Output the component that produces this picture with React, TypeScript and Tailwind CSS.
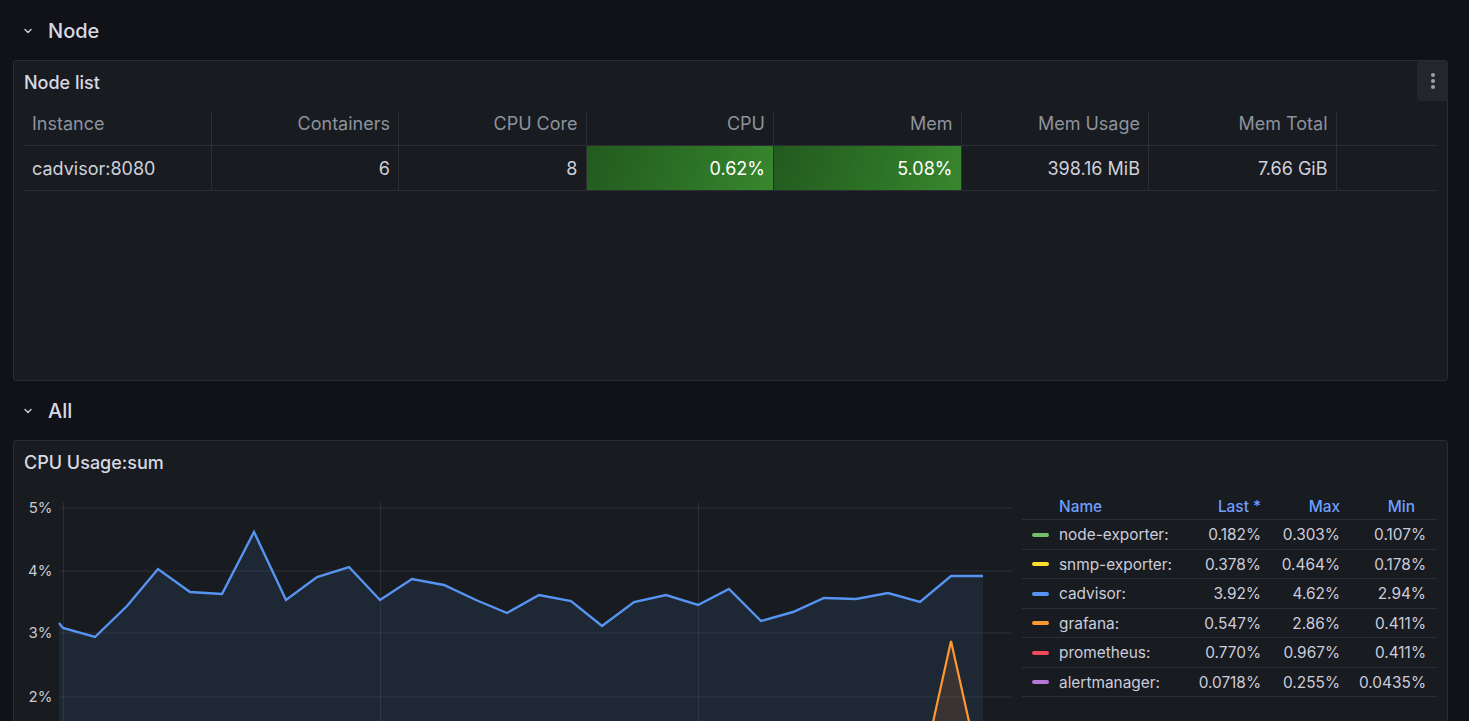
import { ReactNode } from "react";

type Pt = [number, number];

// chart points, in page pixels (svg viewBox matches page coords)
const cadvisorLine: Pt[] = [
  [59, 623], [63, 628], [95, 637], [127, 606], [158, 569], [190, 592], [222, 594], [254, 532],
  [286, 600], [317, 577], [349, 567], [380, 600], [412, 579], [444, 585], [476, 600], [507, 613],
  [539, 595], [571, 601], [602, 626], [634, 602], [666, 595], [698, 605], [729, 589], [761, 621],
  [793, 612], [824, 598], [856, 599], [888, 593], [920, 602], [951, 576], [983, 576],
];
const grafanaLine: Pt[] = [[888, 790], [920, 781], [951, 641], [983, 784]];

const toPath = (pts: Pt[]) => pts.map(([x, y], i) => `${i === 0 ? "M" : "L"}${x} ${y}`).join(" ");
const toArea = (pts: Pt[], base: number) =>
  `${toPath(pts)} L${pts[pts.length - 1][0]} ${base} L${pts[0][0]} ${base} Z`;

const yTicks = [
  { label: "5%", y: 508 },
  { label: "4%", y: 571 },
  { label: "3%", y: 633 },
  { label: "2%", y: 697 },
];

const nodeColumns = ["Instance", "Containers", "CPU Core", "CPU", "Mem", "Mem Usage", "Mem Total", ""];

const legend = [
  { name: "node-exporter:", color: "#73BF69", last: "0.182%", max: "0.303%", min: "0.107%" },
  { name: "snmp-exporter:", color: "#FADE2A", last: "0.378%", max: "0.464%", min: "0.178%" },
  { name: "cadvisor:", color: "#5794F2", last: "3.92%", max: "4.62%", min: "2.94%" },
  { name: "grafana:", color: "#FF9830", last: "0.547%", max: "2.86%", min: "0.411%" },
  { name: "prometheus:", color: "#F2495C", last: "0.770%", max: "0.967%", min: "0.411%" },
  { name: "alertmanager:", color: "#B877D9", last: "0.0718%", max: "0.255%", min: "0.0435%" },
];

const RowHeader = ({ title }: { title: string }) => (
  <div className="h-[30px] flex items-center">
    <div className="w-[16px] ml-[7px] flex items-center justify-center text-[#ccccdc]">
      <svg width="10" height="6" viewBox="0 0 10 6" fill="none">
        <path d="M2 1.5 L5 4.5 L8 1.5" stroke="currentColor" strokeWidth="1.4" strokeLinecap="round" strokeLinejoin="round" />
      </svg>
    </div>
    <span className="ml-[12px] text-[20px] font-medium text-[#d8d9e3] leading-none">{title}</span>
  </div>
);

const Panel = ({ title, menu, className, children }: { title: string; menu?: boolean; className: string; children: ReactNode }) => (
  <div className={`bg-[#181b1f] border border-[#2a2c32] rounded-[3px] flex flex-col ${className}`}>
    <div className="h-[40px] flex items-center justify-between shrink-0">
      <span className="pl-[10px] pt-[3px] text-[18px] font-medium text-[#d8d9e3]">{title}</span>
      {menu && (
        <div className="w-[31px] h-[40px] -mr-[1px] bg-[#24262c] rounded-[3px] flex flex-col items-center justify-center gap-[2px]">
          <span className="w-[4px] h-[4px] rounded-full bg-[#9fa0ab]" />
          <span className="w-[4px] h-[4px] rounded-full bg-[#9fa0ab]" />
          <span className="w-[4px] h-[4px] rounded-full bg-[#9fa0ab]" />
        </div>
      )}
    </div>
    {children}
  </div>
);

const NodeTable = () => {
  const cells = ["cadvisor:8080", "6", "8", "0.62%", "5.08%", "398.16 MiB", "7.66 GiB", ""];

  return (
    <div className="mx-[10px] mt-[10px] text-[18px]">
      {/* Header */}
      <div className="grid grid-cols-[repeat(7,187.5px)_1fr] h-[35px] border-b border-[#2c2e34]">
        {nodeColumns.map((col, i) => (
          <div
            key={i}
            className={`flex items-start leading-[25px] px-[8px] text-[#8e929d] ${i === 0 ? "justify-start" : "justify-end"} ${i < 7 ? "border-r border-[#2c2e34]" : ""}`}
          >
            {col}
          </div>
        ))}
      </div>

      {/* Row */}
      <div className="grid grid-cols-[repeat(7,187.5px)_1fr] h-[45px] border-b border-[#2c2e34]">
        {cells.map((val, i) => {
          const green = i === 3 || i === 4;
          return (
            <div
              key={i}
              className={`flex items-center pt-[1px] px-[8px] ${i === 0 ? "justify-start" : "justify-end"} ${i < 7 ? "border-r border-[#2c2e34]" : ""} ${green ? "bg-[linear-gradient(110deg,#235a1f,#2c7226_55%,#38872e)] text-white" : "text-[#d0d1dc]"}`}
            >
              {val}
            </div>
          );
        })}
      </div>
    </div>
  );
};

const CpuChart = () => (
  <svg width="988" height="240" viewBox="24 495 988 240" className="mt-[14px] shrink-0 block">
    {/* grid */}
    {[...yTicks.map((t) => t.y), 760].map((y) => (
      <line key={y} x1="61" x2="1012" y1={y} y2={y} stroke="rgba(204,204,220,0.12)" strokeWidth="1" />
    ))}
    {[63.5, 380.5, 698.5].map((x) => (
      <line key={x} x1={x} x2={x} y1="502" y2="800" stroke="rgba(204,204,220,0.1)" strokeWidth="1" />
    ))}

    {/* series */}
    <path d={toArea(cadvisorLine, 800)} fill="#5794F2" fillOpacity="0.1" />
    <path d={toArea(grafanaLine, 800)} fill="#FF9830" fillOpacity="0.12" />
    <path d={toPath(grafanaLine)} fill="none" stroke="#FF9830" strokeWidth="2.2" strokeLinejoin="miter" />
    <path d={toPath(cadvisorLine)} fill="none" stroke="#5794F2" strokeWidth="2.4" strokeLinejoin="miter" />

    {/* y axis */}
    {yTicks.map((t) => (
      <text
        key={t.label}
        x="52.5"
        y={t.y}
        dy="0.36em"
        textAnchor="end"
        fontSize="15"
        fill="#c7c8d2"
        fontFamily="Inter, 'Noto Sans', sans-serif"
      >
        {t.label}
      </text>
    ))}
  </svg>
);

const Legend = () => (
  <div className="w-[415px] mt-[13px] text-[15.4px] shrink-0">
    <div className="grid grid-cols-[168px_79px_79px_1fr] h-[26px] border-b border-[#2c2e34] items-center font-medium text-[#6E9FFF]">
      <span className="pl-[37px]">Name</span>
      <span className="text-right pr-[8px]">Last *</span>
      <span className="text-right pr-[8px]">Max</span>
      <span className="text-right pr-[22px]">Min</span>
    </div>
    {legend.map((row) => (
      <div
        key={row.name}
        className="grid grid-cols-[168px_79px_79px_1fr] h-[29.5px] border-b border-[#2c2e34] items-center pt-[1px] text-[#ccccdc]"
      >
        <div className="flex items-center">
          <span className="ml-[10px] w-[17px] h-[4px] rounded-full" style={{ backgroundColor: row.color }} />
          <span className="ml-[10px]">{row.name}</span>
        </div>
        <span className="text-right pr-[8px]">{row.last}</span>
        <span className="text-right pr-[8px]">{row.max}</span>
        <span className="text-right pr-[11px]">{row.min}</span>
      </div>
    ))}
  </div>
);

export default function App() {
  return (
    <div className="h-[721px] overflow-hidden bg-[#111217] pl-[13px] pr-[21px] pt-[16px] font-['Inter','Noto_Sans',sans-serif]">
      <RowHeader title="Node" />

      <Panel title="Node list" menu className="mt-[14px] h-[321px]">
        <NodeTable />
      </Panel>

      <div className="mt-[15px]">
        <RowHeader title="All" />
      </div>

      <Panel title="CPU Usage:sum" className="mt-[14px] h-[420px]">
        <div className="flex items-start gap-[10px] px-[10px]">
          <CpuChart />
          <Legend />
        </div>
      </Panel>
    </div>
  );
}
